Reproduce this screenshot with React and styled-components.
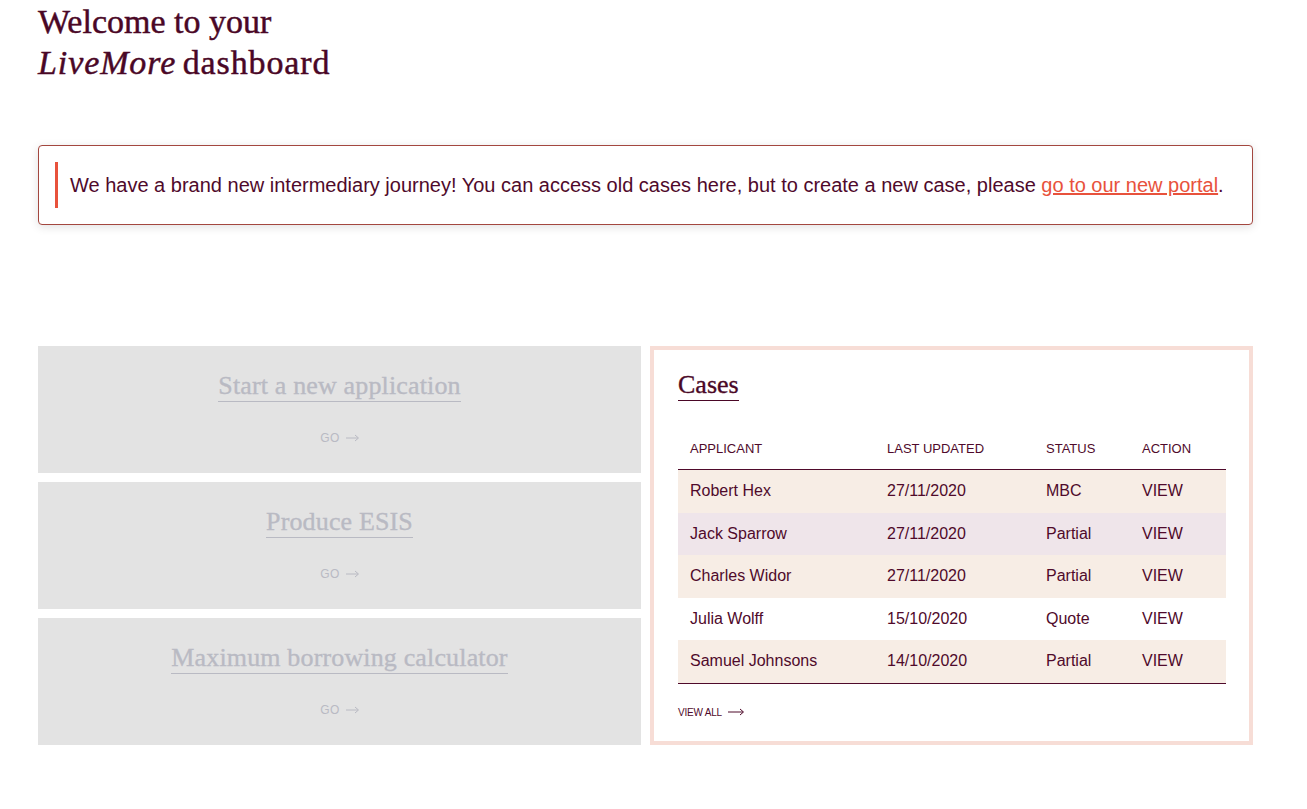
import React from 'react';
import styled, { createGlobalStyle } from 'styled-components';

const GlobalStyle = createGlobalStyle`
  body {
    margin: 0;
    background: #fff;
    font-family: "Liberation Sans", Arial, sans-serif;
    color: #4f0a2b;
  }
`;

const serif = `"Liberation Serif", "Times New Roman", serif`;

const Page = styled.div`
  width: 1215px;
  padding: 0 0 40px 38px;
`;

const Title = styled.h1`
  margin: 0;
  padding-top: 1px;
  font-family: ${serif};
  font-weight: 400;
  font-size: 34px;
  line-height: 41px;
  -webkit-text-stroke: 0.45px #4a0726;
  color: #4a0726;
  em {
    font-style: italic;
    letter-spacing: 0.9px;
    margin-right: -2px;
  }
  span {
    letter-spacing: 0.9px;
  }
`;

const Alert = styled.div`
  margin-top: 62px;
  border: 1px solid #a3473f;
  border-radius: 4px;
  background: #fff;
  box-shadow: 0 2px 10px rgba(0, 0, 0, 0.12);
  padding: 16px;
`;

const AlertInner = styled.div`
  border-left: 3px solid #e8523c;
  padding-left: 12px;
  font-size: 20px;
  line-height: 46px;
  color: #4f0a2b;
  a {
    color: #e8523c;
    text-decoration: underline;
  }
`;

const Grid = styled.div`
  margin-top: 121px;
  display: grid;
  grid-template-columns: 603px 603px;
  column-gap: 9px;
`;

const Stack = styled.div`
  display: flex;
  flex-direction: column;
  gap: 9px;
`;

const ActionCard = styled.div`
  height: 127px;
  box-sizing: border-box;
  background: #e3e3e3;
  display: flex;
  flex-direction: column;
  align-items: center;
  padding-top: 26px;
`;

const CardTitle = styled.span`
  font-family: ${serif};
  font-size: 26px;
  line-height: 28px;
  letter-spacing: 0.15px;
  color: #b9bac3;
  -webkit-text-stroke: 0.35px #b9bac3;
  border-bottom: 1px solid #b9bac3;
  padding-bottom: 1px;
`;

const Go = styled.span`
  margin-top: 29px;
  display: flex;
  align-items: center;
  gap: 6px;
  font-size: 12px;
  color: #b9bac3;
  letter-spacing: 0.3px;
`;

const CasesPanel = styled.div`
  border: 4px solid #f7ddd6;
  padding: 21px 24px 0;
  background: #fff;
`;

const CasesTitle = styled.h2`
  display: inline-block;
  margin: 0;
  font-family: ${serif};
  font-weight: 400;
  font-size: 26px;
  line-height: 28px;
  padding-bottom: 1px;
  -webkit-text-stroke: 0.35px #4a0726;
  border-bottom: 1px solid #4a0726;
  color: #4a0726;
`;

const Table = styled.table`
  margin-top: 28px;
  width: 100%;
  table-layout: fixed;
  border-collapse: collapse;
  border-bottom: 1px solid #4f0a2b;
`;

const Th = styled.th`
  box-sizing: border-box;
  text-align: left;
  font-weight: 400;
  font-size: 13px;
  line-height: 15px;
  padding: 12px 12px 13px;
  text-transform: uppercase;
  color: #4f0a2b;
  border-bottom: 1px solid #4f0a2b;
  width: ${(p) => p.$w}px;
`;

const Tr = styled.tr`
  background: ${(p) => p.$bg};
`;

const Td = styled.td`
  font-size: 16px;
  line-height: 18.5px;
  padding: 12px;
  color: #4f0a2b;
`;

const ViewAll = styled.div`
  margin-top: 23px;
  display: flex;
  align-items: center;
  gap: 6px;
  font-size: 10px;
  color: #4f0a2b;
  letter-spacing: -0.2px;
`;

const Arrow = ({ w = 14, color }) => (
  <svg width={w} height="8" viewBox={`0 0 ${w} 8`} fill="none">
    <line x1="0" y1="4" x2={w - 1} y2="4" stroke={color} strokeWidth="1" />
    <path d={`M${w - 4} 1 L${w - 0.5} 4 L${w - 4} 7`} stroke={color} strokeWidth="1" fill="none" />
  </svg>
);

const cards = ['Start a new application', 'Produce ESIS', 'Maximum borrowing calculator'];

const rows = [
  ['Robert Hex', '27/11/2020', 'MBC', '#f7ede5'],
  ['Jack Sparrow', '27/11/2020', 'Partial', '#efe5ea'],
  ['Charles Widor', '27/11/2020', 'Partial', '#f7ede5'],
  ['Julia Wolff', '15/10/2020', 'Quote', '#ffffff'],
  ['Samuel Johnsons', '14/10/2020', 'Partial', '#f7ede5'],
];

export default function App() {
  return (
    <Page>
      <GlobalStyle />
      <Title>
        Welcome to your
        <br />
        <em>LiveMore</em> <span>dashboard</span>
      </Title>

      <Alert>
        <AlertInner>
          We have a brand new intermediary journey! You can access old cases here, but to create a new case, please{' '}
          <a href="#">go to our new portal</a>.
        </AlertInner>
      </Alert>

      <Grid>
        <Stack>
          {cards.map((c) => (
            <ActionCard key={c}>
              <CardTitle>{c}</CardTitle>
              <Go>
                GO <Arrow w={13} color="#b9bac3" />
              </Go>
            </ActionCard>
          ))}
        </Stack>

        <CasesPanel>
          <CasesTitle>Cases</CasesTitle>
          <Table>
            <thead>
              <tr>
                <Th $w={197}>Applicant</Th>
                <Th $w={159}>Last updated</Th>
                <Th $w={96}>Status</Th>
                <Th $w={96}>Action</Th>
              </tr>
            </thead>
            <tbody>
              {rows.map(([name, date, status, bg]) => (
                <Tr key={name} $bg={bg}>
                  <Td>{name}</Td>
                  <Td>{date}</Td>
                  <Td>{status}</Td>
                  <Td>VIEW</Td>
                </Tr>
              ))}
            </tbody>
          </Table>
          <ViewAll>
            VIEW ALL <Arrow w={16} color="#4f0a2b" />
          </ViewAll>
        </CasesPanel>
      </Grid>
    </Page>
  );
}
